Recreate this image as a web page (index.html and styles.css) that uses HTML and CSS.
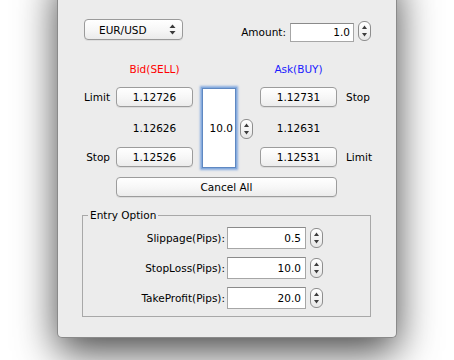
FILE: index.html
```html
<!DOCTYPE html>
<html>
<head>
<meta charset="utf-8">
<link rel="stylesheet" href="styles.css">
</head>
<body>
<div class="stage">
  <div class="window">
    <div class="toprow">
      <div class="combo">
        <span class="combo-text">EUR/USD</span>
        <svg class="combo-arrows" width="7" height="11" viewBox="0 0 7 11"><path d="M0.5 4 L3.5 0.5 L6.5 4 Z" fill="#3a3a3a"/><path d="M0.5 7 L3.5 10.5 L6.5 7 Z" fill="#3a3a3a"/></svg>
      </div>
      <div class="amount">
        <span class="amount-label">Amount:</span>
        <div class="field amount-field">1.0</div>
        <span class="spin amount-spin"><svg width="13" height="20" viewBox="0 0 13 20"><path d="M4 8 L6.5 4.5 L9 8 Z" fill="#3c3c3c"/><path d="M4 12 L6.5 15.5 L9 12 Z" fill="#3c3c3c"/></svg></span>
      </div>
    </div>

    <div class="quote">
      <div class="hdr bid">Bid(SELL)</div>
      <div class="hdr ask">Ask(BUY)</div>

      <div class="lbl-l row2">Limit</div>
      <button class="btn col-bid row2">1.12726</button>
      <div class="field pips">10.0</div>
      <button class="btn col-ask row2">1.12731</button>
      <div class="lbl-r row2">Stop</div>

      <div class="mid col-bid">1.12626</div>
      <span class="spin pips-spin"><svg width="13" height="20" viewBox="0 0 13 20"><path d="M4 8 L6.5 4.5 L9 8 Z" fill="#3c3c3c"/><path d="M4 12 L6.5 15.5 L9 12 Z" fill="#3c3c3c"/></svg></span>
      <div class="mid col-ask">1.12631</div>

      <div class="lbl-l row4">Stop</div>
      <button class="btn col-bid row4">1.12526</button>
      <button class="btn col-ask row4">1.12531</button>
      <div class="lbl-r row4">Limit</div>

      <button class="btn cancel">Cancel All</button>
    </div>

    <fieldset class="entry">
      <legend>Entry Option</legend>
      <div class="entry-grid">
        <span class="elabel">Slippage(Pips):</span>
        <div class="field efield">0.5</div>
        <span class="spin espin"><svg width="13" height="20" viewBox="0 0 13 20"><path d="M4 8 L6.5 4.5 L9 8 Z" fill="#3c3c3c"/><path d="M4 12 L6.5 15.5 L9 12 Z" fill="#3c3c3c"/></svg></span>

        <span class="elabel">StopLoss(Pips):</span>
        <div class="field efield">10.0</div>
        <span class="spin espin"><svg width="13" height="20" viewBox="0 0 13 20"><path d="M4 8 L6.5 4.5 L9 8 Z" fill="#3c3c3c"/><path d="M4 12 L6.5 15.5 L9 12 Z" fill="#3c3c3c"/></svg></span>

        <span class="elabel">TakeProfit(Pips):</span>
        <div class="field efield">20.0</div>
        <span class="spin espin"><svg width="13" height="20" viewBox="0 0 13 20"><path d="M4 8 L6.5 4.5 L9 8 Z" fill="#3c3c3c"/><path d="M4 12 L6.5 15.5 L9 12 Z" fill="#3c3c3c"/></svg></span>
      </div>
    </fieldset>
  </div>
</div>
</body>
</html>
```

FILE: styles.css
```css
* { box-sizing: border-box; }

html, body {
  margin: 0;
  padding: 0;
  background: #ffffff;
  overflow: hidden;
}

body {
  width: 454px;
  height: 360px;
  font-family: "DejaVu Sans", "Verdana", sans-serif;
  font-size: 10.5px;
  color: #000;
}

.stage {
  padding-left: 57px;
}

.window {
  width: 340px;
  height: 368px;
  margin-top: -30px;
  padding-top: 49px;
  background: #ececec;
  border: 1px solid #8a8a8a;
  border-top: none;
  border-radius: 0 0 5px 5px;
  box-shadow: 0 14px 40px rgba(0, 0, 0, 0.72);
}

/* top row */
.toprow {
  display: flex;
  justify-content: space-between;
  align-items: flex-start;
  padding: 0 25px 0 26px;
  height: 23px;
}

.combo {
  width: 99px;
  height: 21px;
  display: flex;
  align-items: center;
  justify-content: space-between;
  padding: 0 6px 0 14px;
  border: 1px solid #9a9a9a;
  border-radius: 4px;
  background: linear-gradient(#ffffff, #f6f6f6 55%, #ebebeb);
  box-shadow: 0 1px 0 rgba(0,0,0,0.06);
}

.combo-arrows { display: block; }

.amount {
  display: flex;
  align-items: flex-start;
}

.amount-label {
  line-height: 19px;
  margin-top: 4px;
  margin-right: 4px;
}

.field {
  background: #fff;
  border: 1px solid #a6a6a6;
  border-top-color: #8a8a8a;
  text-align: right;
  padding-right: 3px;
}

.amount-field {
  width: 64px;
  height: 19px;
  line-height: 17px;
  margin-top: 4px;
}

.spin {
  display: block;
  width: 13px;
  height: 20px;
  border: 1px solid #8e8e8e;
  border-radius: 6px;
  background: linear-gradient(#ffffff, #f4f4f4 48%, #dcdcdc 50%, #f4f4f4 52%, #e6e6e6);
}

.spin svg {
  display: block;
  margin: -1px 0 0 -1px;
}

.amount-spin {
  margin-top: 2px;
  margin-left: 4px;
}

/* quote grid */
.quote {
  display: grid;
  grid-template-columns: 36px 77px 9px 34px 4px 13px 7px 77px 9px 1fr;
  grid-template-rows: 15px 20px 20px 20px 20px;
  row-gap: 10px;
  margin-top: 20px;
  margin-left: 22px;
}

.hdr {
  grid-row: 1;
  text-align: center;
  line-height: 15px;
}

.bid { grid-column: 2; color: #ff0000; }
.ask { grid-column: 8; color: #1a1aff; }

.row2 { grid-row: 2; }
.row4 { grid-row: 4; }

.lbl-l {
  grid-column: 1;
  text-align: right;
  padding-right: 6px;
  line-height: 20px;
}

.lbl-r {
  grid-column: 10;
  line-height: 20px;
}

.col-bid { grid-column: 2; }
.col-ask { grid-column: 8; }

.btn {
  font: inherit;
  color: #000;
  margin: 0;
  padding: 0;
  height: 20px;
  border: 1px solid #9c9c9c;
  border-radius: 4px;
  background: linear-gradient(#ffffff, #f7f7f7 50%, #ececec);
  box-shadow: 0 1px 0 rgba(0,0,0,0.07);
  text-align: center;
  line-height: 18px;
}

.mid {
  grid-row: 3;
  text-align: center;
  line-height: 22px;
}

.pips {
  grid-column: 4;
  grid-row: 2 / 5;
  margin: 1px 0 -1px 0;
  display: flex;
  align-items: center;
  justify-content: flex-end;
  padding-right: 2px;
  border-color: #5f88c2;
  box-shadow: 0 0 0 1px #86acde, 0 0 2px 2px rgba(110, 155, 220, 0.8);
}

.pips-spin {
  grid-column: 6;
  grid-row: 3;
  margin-top: 2px;
}

.cancel {
  grid-column: 2 / 9;
  grid-row: 5;
}

/* entry option */
.entry {
  margin: 12px 0 0 24px;
  width: 289px;
  padding: 0 0 7px 0;
  border: 1px solid #a8a8a8;
  min-width: 0;
}

.entry legend {
  margin-left: 5px;
  padding: 0 2px;
  line-height: 13px;
}

.entry-grid {
  display: grid;
  grid-template-columns: 144px 79px 17px;
  grid-auto-rows: 22px;
  row-gap: 8px;
  margin-top: 5px;
}

.elabel {
  text-align: right;
  padding-right: 2px;
  line-height: 22px;
}

.efield {
  height: 22px;
  line-height: 20px;
  padding-right: 4px;
}

.espin {
  margin-left: 4px;
  margin-top: 1px;
}
```
